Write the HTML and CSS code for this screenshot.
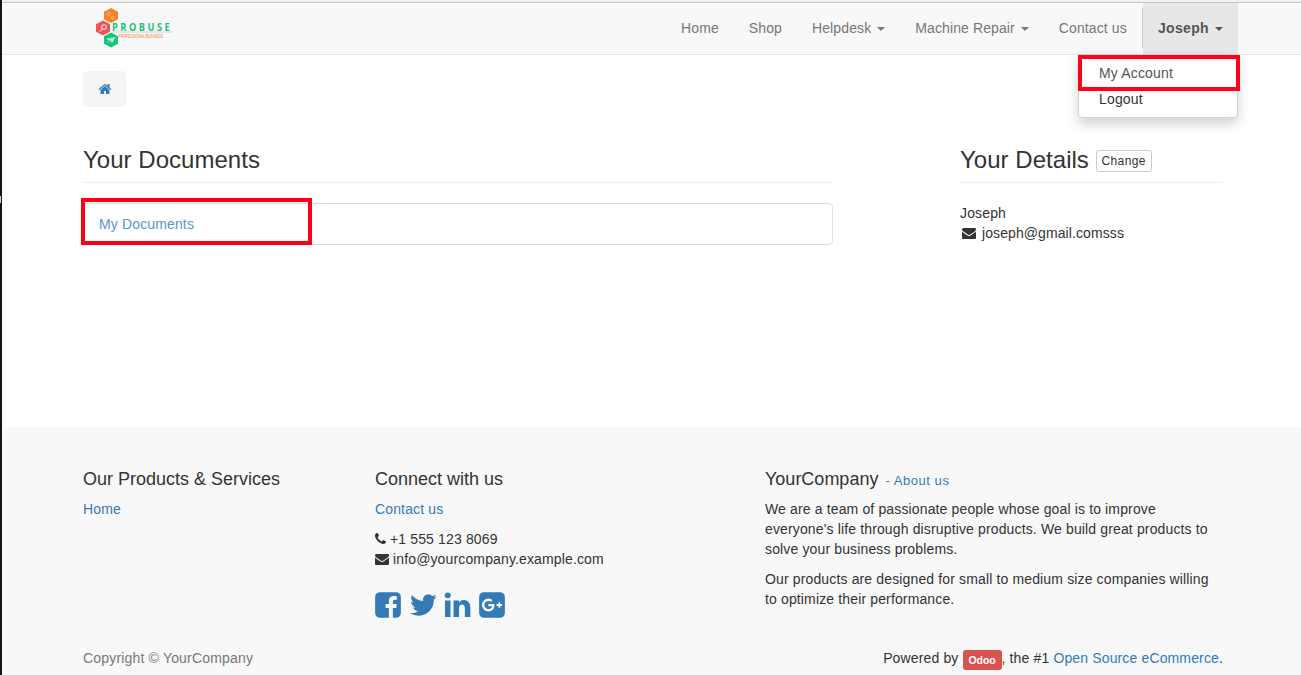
FILE: index.html
```html
<!DOCTYPE html>
<html lang="en">
<head>
<meta charset="utf-8">
<title>My Account | YourCompany</title>
<link rel="stylesheet" href="styles.css">
</head>
<body>
<svg class="sprite" aria-hidden="true">
  <symbol id="envelope" viewBox="0 0 1792 1792"><path d="M1792 710v794q0 66-47 113t-113 47h-1472q-66 0-113-47t-47-113v-794q44 49 101 87 362 246 497 345 57 42 92.5 65.5t94.5 48 110 24.5h2q51 0 110-24.5t94.5-48 92.5-65.5q170-123 498-345 57-39 100-87zm0-294q0 79-49 151t-122 123q-376 261-468 325-10 7-42.5 31t-54 38.5-52 32.5-57.5 27-50 9h-2q-23 0-50-9t-57.5-27-52-32.5-54-38.5-42.5-31q-91-64-262-182.5t-205-142.5q-62-42-117-115.5t-55-136.5q0-78 41.5-130t118.5-52h1472q65 0 112.5 47t47.5 113z"/></symbol>
</svg>
<div class="page">
  <header class="header">
    <div class="container navbar">
      <a class="brand" href="#">
        <svg width="90" height="42" viewBox="0 0 90 42">
          <path d="M15 0l7 3.8v7.4l-7 3.8-7-3.8V3.8z" fill="#f5822a"/>
          <path d="M7 12.500l7 3.800v7.400l-7 3.800-7-3.800v-7.400z" fill="#f05458"/>
          <path d="M15 24.500l7 3.800v7.400l-7 3.800-7-3.800v-7.400z" fill="#18c37b"/>
          <g fill="none" stroke="#fbb47c" stroke-width="1"><circle cx="12.800" cy="6" r="1.700"/><circle cx="17" cy="9.600" r="1.500"/></g>
          <g fill="none" stroke="#ffd5d5" stroke-width="1.100"><circle cx="8" cy="19" r="2.300"/><path d="M6.300 20.800l-2.600 2.600"/></g>
          <path d="M11 31l8-1.500-3 5-1.600-2.500zM11 34.500l3-2" fill="#a6ebcb" stroke="#d5f6e8" stroke-width=".6"/>
          <g transform="translate(16 22.800) scale(.84 1)"><text class="brand-name">PROBUSE</text></g>
          <path d="M16 24h60" stroke="#c4ccc8" stroke-width=".8"/>
          <g transform="translate(22.500 29.800) scale(.76 1)"><text class="brand-tag">PROFESSIONAL BUSINESS</text></g>
        </svg>
      </a>
      <nav class="nav">
        <a href="#">Home</a>
        <a href="#">Shop</a>
        <a href="#">Helpdesk <i class="caret"></i></a>
        <a href="#">Machine Repair <i class="caret"></i></a>
        <a href="#">Contact us</a>
        <div class="user">
          <a class="user-toggle" href="#"><b>Joseph</b> <i class="caret"></i></a>
          <div class="menu">
            <a class="menu-current" href="#">My Account</a>
            <a href="#">Logout</a>
          </div>
        </div>
      </nav>
    </div>
  </header>
  <main class="container main">
    <div class="crumb">
      <a href="#" aria-label="Home"><svg class="fa" viewBox="0 0 1792 1792"><path d="M1472 992v480q0 26-19 45t-45 19h-384v-384h-256v384h-384q-26 0-45-19t-19-45v-480q0-1 .5-3t.5-3l575-474 575 474q1 2 1 6zm223-69l-62 74q-8 9-21 11h-3q-13 0-21-7l-692-577-692 577q-12 8-24 7-13-2-21-11l-62-74q-8-10-7-23.5t11-21.5l719-599q32-26 76-26t76 26l244 204v-195q0-14 9-23t23-9h192q14 0 23 9t9 23v408l219 182q10 8 11 21.5t-7 23.5z"/></svg></a>
    </div>
    <div class="columns">
      <section class="documents">
        <h3 class="title">Your Documents</h3>
        <div class="list"><a href="#">My Documents</a><span class="highlight"></span></div>
      </section>
      <section class="details">
        <h3 class="title">Your Details <a class="btn" href="#">Change</a></h3>
        <div>Joseph</div>
        <div class="email"><svg class="fa"><use href="#envelope"/></svg>joseph@gmail.comsss</div>
      </section>
    </div>
  </main>
  <footer class="footer">
    <div class="container footer-grid">
      <section>
        <h4>Our Products &amp; Services</h4>
        <a href="#">Home</a>
      </section>
      <section>
        <h4>Connect with us</h4>
        <p><a href="#">Contact us</a></p>
        <div class="contact"><svg class="fa phone" viewBox="192 0 1408 1792"><path d="M1600 1240q0 27-10 70.5t-21 68.5q-21 50-122 106-94 51-186 51-27 0-53-3.5t-57.5-12.5-47-14.5-55.5-20.5-49-18q-98-35-175-83-127-79-264-216t-216-264q-48-77-83-175-3-9-18-49t-20.5-55.5-14.5-47-12.5-57.5-3.5-53q0-92 51-186 56-101 106-122 25-11 68.5-21t70.5-10q14 0 21 3 18 6 53 76 11 19 30 54t35 63.5 31 53.5q3 4 17.5 25t21.5 35.5 7 28.5q0 20-28.5 50t-62 55-62 53-28.5 46q0 9 5 22.5t8.500 20.500 14 24 11.500 19q76 137 174 235t235 174q2 1 19 11.500t24 14 20.500 8.500 22.500 5q18 0 46-28.500t53-62 55-62 50-28.500q14 0 28.500 7t35.500 21.500 25 17.500q25 15 53.500 31t63.500 35 54 30q70 35 76 53 3 7 3 21z"/></svg>+1 555 123 8069</div>
        <div class="contact"><svg class="fa"><use href="#envelope"/></svg>info@yourcompany.example.com</div>
        <div class="social">
          <a href="#" aria-label="Facebook"><svg viewBox="128 0 1536 1792"><path d="M1376 128q119 0 203.500 84.500t84.500 203.500v960q0 119-84.500 203.500t-203.500 84.500h-188v-595h199l30-232h-229v-148q0-56 23.500-84t91.500-28l122-1v-207q-63-9-178-9-136 0-217.500 80t-81.500 226v171h-200v232h200v595h-532q-119 0-203.500-84.500t-84.500-203.500v-960q0-119 84.500-203.500t203.500-84.500h960z"/></svg></a>
          <a href="#" aria-label="Twitter"><svg viewBox="108 0 1536 1792"><path d="M1684 408q-67 98-162 167 1 14 1 42 0 130-38 259.500t-115.500 248.500-184.500 210.500-258 146-323 54.500q-271 0-496-145 35 4 78 4 225 0 401-138-105-2-188-64.500t-114-159.500q33 5 61 5 43 0 85-11-112-23-185.500-111.500t-73.500-205.500v-4q68 38 146 41-66-44-105-115t-39-154q0-88 44-163 121 149 294.500 238.500t371.500 99.500q-8-38-8-74 0-134 94.500-228.500t228.500-94.500q140 0 236 102 109-21 205-78-37 115-142 178 93-10 186-50z"/></svg></a>
          <a href="#" aria-label="LinkedIn"><svg viewBox="98 0 1536 1792"><path d="M477 625v991h-330v-991h330zm21-306q1 73-50.500 122t-135.500 49h-2q-82 0-132-49t-50-122q0-74 51.500-122.500t134.500-48.500 133 48.500 51 122.500zm1166 729v568h-329v-530q0-105-40.500-164.500t-126.500-59.500q-63 0-105.500 34.500t-63.500 85.500q-11 30-11 81v553h-329q2-399 2-647t-1-296l-1-48h329v144h-2q20-32 41-56t56.500-52 87-43.500 114.500-15.500q171 0 275 113.500t104 332.500z"/></svg></a>
          <a href="#" aria-label="Google Plus"><svg viewBox="128 0 1536 1792"><path fill-rule="evenodd" d="M1045 905q0-26-6-64h-362v132h217q-3 24-16.500 50t-37.500 53-66.500 44.500-96.500 17.500q-99 0-169-71t-70-171 70-171 169-71q92 0 153 59l104-101q-108-100-257-100-160 0-272 112.500t-112 271.500 112 271.500 272 112.500q165 0 266.500-105t101.500-270zm345 46h109v-110h-109v-110h-110v110h-110v110h110v110h110v-110zm274-535v960q0 119-84.500 203.500t-203.500 84.500h-960q-119 0-203.500-84.500t-84.500-203.500v-960q0-119 84.500-203.500t203.500-84.500h960q119 0 203.500 84.500t84.500 203.500z"/></svg></a>
        </div>
      </section>
      <section>
        <h4>YourCompany <small>- <a href="#">About us</a></small></h4>
        <p>We are a team of passionate people whose goal is to improve<br>everyone's life through disruptive products. We build great products to<br>solve your business problems.</p>
        <p>Our products are designed for small to medium size companies willing<br>to optimize their performance.</p>
      </section>
    </div>
    <div class="container legal">
      <span class="copyright">Copyright © YourCompany</span>
      <span>Powered by <a class="odoo" href="#">Odoo</a>, the #1 <a href="#">Open Source eCommerce</a>.</span>
    </div>
  </footer>
</div>
</body>
</html>
```
FILE: styles.css
```css
*, *::before, *::after { box-sizing: border-box; }
body {
  margin: 0;
  font: 14px/20px "Liberation Sans", Arial, sans-serif;
  letter-spacing: .14px;
  color: #333;
  background: #fff;
}
a { color: #337ab7; text-decoration: none; }
p { margin: 0 0 10px; }
.sprite { display: none; }
.page {
  height: 675px;
  overflow: hidden;
  display: flex;
  flex-direction: column;
  border-left: 2px solid #15150c;
}
.page::before {
  content: "";
  position: absolute;
  left: 0;
  top: 196px;
  width: 1px;
  height: 7px;
  background: #d5d5dc;
}
.container { width: 1170px; margin-left: 66px; padding: 0 15px; }
.fa { width: 14px; height: 14px; fill: currentColor; }

/* Header */
.header {
  height: 55px;
  border-top: 2px solid #f2f1f0;
  border-bottom: 1px solid #e7e7e7;
  background: #f8f8f8;
  box-shadow: inset 0 1px #c8c6c3;
}
.navbar { display: flex; justify-content: space-between; padding-right: 0; }
.brand { padding: 6px 0 0 13px; }
.brand svg { display: block; }
.brand-name { font: bold 11px "Open Sans", sans-serif; letter-spacing: 3px; fill: #18c37b; }
.brand-tag { font: 4.5px "Liberation Sans", sans-serif; letter-spacing: 0; fill: #f5822a; }
.nav { display: flex; padding-top: 1px; letter-spacing: .11px; }
.nav > a, .user-toggle { display: block; padding: 15px 15px 16px; color: #777; white-space: nowrap; }
.caret {
  display: inline-block;
  margin-left: 2px;
  vertical-align: middle;
  border-top: 4px solid;
  border-left: 4px solid transparent;
  border-right: 4px solid transparent;
}
.user { position: relative; }
.user::before {
  content: "";
  position: absolute;
  left: 0;
  top: 5px;
  width: 1px;
  height: 40px;
  background: #c8c8c8;
}
.user-toggle { margin-left: 1px; background: #e7e7e7; color: #555; }
.user-toggle b { letter-spacing: .35px; }
.menu {
  position: absolute;
  right: 0;
  top: 51px;
  width: 160px;
  height: 64px;
  padding: 5px 0;
  border: 1px solid #d2d2d2;
  border-radius: 0 0 4px 4px;
  background: #fff;
  box-shadow: 0 6px 12px rgba(0, 0, 0, .175);
  letter-spacing: .16px;
}
.menu a { display: block; padding: 3px 20px; color: #333; }
.menu .menu-current { color: #555; }
.menu::after {
  content: "";
  position: absolute;
  left: -1px;
  top: 0;
  width: 162px;
  height: 36px;
  border: 4px solid #ff0019;
}

/* Account */
.main { height: 372px; padding-top: 16px; }
.crumb {
  width: 43px;
  height: 36px;
  padding: 8px 15px;
  border-radius: 4px;
  background: #f5f5f5;
}
.crumb .fa { display: block; margin-top: 3px; }
.columns { display: flex; justify-content: space-between; margin-top: 40px; }
.documents { width: 750px; }
.details { width: 263px; }
.title {
  height: 36px;
  margin: 0 0 20px;
  border-bottom: 1px solid #eee;
  font-size: 24px;
  font-weight: 400;
  line-height: 26px;
  letter-spacing: .03px;
}
.btn {
  display: inline-block;
  padding: 1px 5px;
  border: 1px solid #ccc;
  border-radius: 3px;
  color: #333;
  font-size: 12px;
  line-height: 18px;
  letter-spacing: .35px;
  vertical-align: 3px;
}
.list {
  position: relative;
  height: 42px;
  padding: 10px 15px;
  border: 1px solid #ddd;
  border-radius: 4px;
}
.list a { color: #5b95cb; }
.highlight {
  position: absolute;
  left: -3px;
  top: -6px;
  width: 231px;
  height: 47px;
  border: 4px solid #ff0019;
}
.email, .contact { display: flex; align-items: center; gap: 4px; }
.email { padding-left: 2px; gap: 6px; letter-spacing: .09px; }

/* Footer */
.footer { flex: 1; background: #f8f8f8; }
.footer-grid {
  display: grid;
  grid-template-columns: 292px 390px 458px;
  height: 221px;
  padding-top: 42px;
}
.footer h4 { height: 20px; margin: 0 0 10px; font-size: 18px; font-weight: 400; line-height: 20px; letter-spacing: 0; }
.footer h4 small { margin-left: 2px; color: #777; font-size: 13px; line-height: 1; letter-spacing: .55px; }
.phone { width: 11px; }
.social { display: flex; gap: 8.7px; padding-top: 21px; }
.social svg { display: block; width: 26px; height: 30px; fill: #337ab7; overflow: visible; }
.legal { display: flex; justify-content: space-between; }
.copyright { color: #777; letter-spacing: .18px; }
.odoo {
  display: inline-block;
  padding: 0 6px;
  border-radius: 3px;
  background: #d9534f;
  color: #fff;
  font-size: 10.5px;
  font-weight: 700;
  letter-spacing: -.1px;
  vertical-align: -1px;
}
```
